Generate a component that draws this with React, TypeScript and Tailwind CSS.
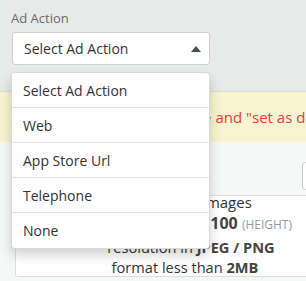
import React from "react";

export default function App() {
  const items = ["Select Ad Action", "Web", "App Store Url", "Telephone", "None"];
  return (
    <div
      className="relative w-[306px] h-[281px] overflow-hidden bg-[#f6f7f7]"
      style={{ fontFamily: '"Open Sans", "Noto Sans", sans-serif' }}
    >
      {/* top gray section */}
      <div className="h-[92px] bg-[#e8e9e9] pt-[9px] pl-[12px] border-b border-[#dcdcd0]">
        <div className="text-[13px] leading-[18px] text-[#6b6b6b] -ml-[1px]">Ad Action</div>
        <div className="mt-[5px] w-[198px] h-[33px] bg-white border border-[#cfcfcf] rounded-[3px] flex items-center justify-between pl-[11px] pr-[8px]">
          <span className="text-[14px] text-[#333]">Select Ad Action</span>
          <svg width="10" height="6" viewBox="0 0 10 6">
            <path d="M0 6 L5 0 L10 6 Z" fill="#4a5156" />
          </svg>
        </div>
      </div>

      {/* yellow notice */}
      <div className="h-[50px] bg-[#f8f4d0] flex items-center whitespace-nowrap pl-[66px]">
        <span className="text-[15px] text-[#dc3f3f]">Please choose image and "set as default"</span>
      </div>

      {/* lower section */}
      <div className="relative h-[139px]">
        <div className="absolute left-[302px] top-[20px] w-[60px] h-[28px] bg-white border border-[#cccccc] rounded-[4px]" />
        <div className="absolute left-[15px] top-[53px] w-[340px] h-[82px] bg-white border border-[#dddddd] rounded-[3px] text-center text-[#333] whitespace-nowrap">
          <div className="text-[15px] leading-[14px] -mt-[1px] pr-[26px]">Recommended images</div>
          <div className="mt-[2px] leading-[24px] pl-[36px]">
            <span className="text-[16px] font-bold text-[#444]">300 </span>
            <span className="text-[12px] text-[#999]">(WIDTH)</span>
            <span className="text-[16px] font-bold text-[#444]"> X 100 </span>
            <span className="text-[12px] text-[#999]">(HEIGHT)</span>
          </div>
          <div className="text-[14.6px] leading-[20px] pl-[12px]">
            resolution in <span className="font-bold text-[#444]">JPEG / PNG</span>
          </div>
          <div className="text-[14.6px] leading-[20px]">
            format less than <span className="font-bold text-[#444]">2MB</span>
          </div>
        </div>
      </div>

      {/* dropdown menu */}
      <div className="absolute left-[11px] top-[72px] w-[199px] bg-white border border-[rgba(0,0,0,0.15)] rounded-[4px] shadow-[0_6px_12px_rgba(0,0,0,0.18)]">
        {items.map((it, i) => (
          <div
            key={it}
            className={
              "h-[35px] flex items-center pl-[11px] text-[14px] text-[#333] " +
              (i < items.length - 1 ? "border-b border-[#e5e5e5]" : "")
            }
          >
            {it}
          </div>
        ))}
      </div>
    </div>
  );
}
